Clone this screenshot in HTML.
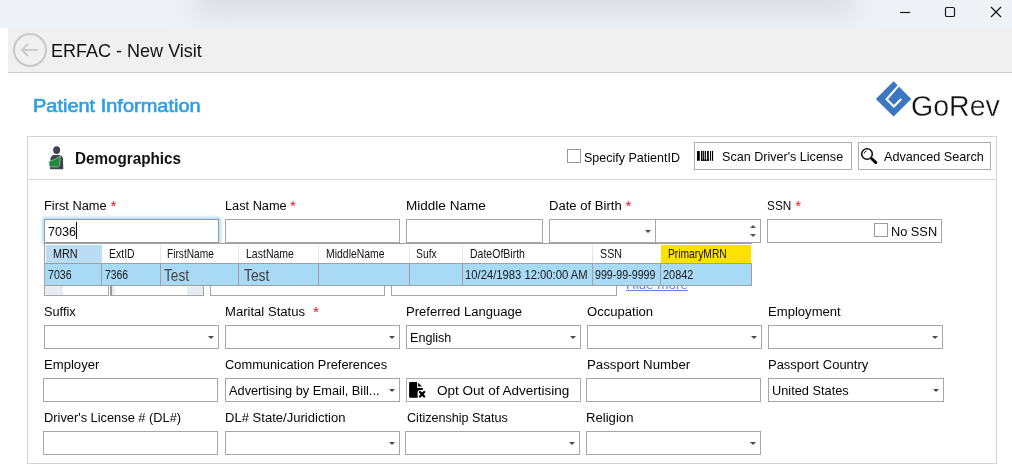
<!DOCTYPE html>
<html><head><meta charset="utf-8"><style>
html,body{margin:0;padding:0;background:#fff;width:1012px;height:465px;overflow:hidden;}
body{position:relative;font-family:"Liberation Sans", sans-serif;}
body>div,body>svg{position:absolute;}
.t{white-space:nowrap;}
</style></head><body>
<div style="left:0px;top:0px;width:1012px;height:28px;background:#eef2f7;overflow:hidden;"></div>
<div style="left:195px;top:-14px;width:660px;height:28px;background:#d3d7dc;filter:blur(14px);opacity:0.85;"></div>
<svg style="left:890px;top:0px" width="122" height="28"><g stroke="#1a1a1a" stroke-width="1.2" fill="none"><line x1="10" y1="12.5" x2="20" y2="12.5"/><rect x="55.5" y="7.5" width="9" height="9" rx="1.3"/><line x1="101" y1="7" x2="111" y2="17"/><line x1="111" y1="7" x2="101" y2="17"/></g></svg>
<div style="left:8px;top:28px;width:1004px;height:44px;background:#f0f0f0;"></div>
<div style="left:8px;top:72px;width:1004px;height:1px;background:#cfcfcf;"></div>
<svg style="left:12px;top:32px" width="36" height="36"><circle cx="18" cy="18" r="16" fill="none" stroke="#c8c8c8" stroke-width="2"/><g stroke="#c8c8c8" stroke-width="1.8" fill="none"><line x1="10" y1="18" x2="26" y2="18"/><polyline points="16,12 10,18 16,24"/></g></svg>
<div class="t" style="left:51.40px;top:43.05px;font-size:17.9px;line-height:17.9px;color:#111;font-weight:400;transform:scaleX(1.0072);transform-origin:0 0;">ERFAC - New Visit</div>
<div class="t" style="left:33.00px;top:97.93px;font-size:17.8px;line-height:17.8px;color:#2f9ee3;font-weight:400;transform:scaleX(1.1229);transform-origin:0 0;-webkit-text-stroke:0.6px #2f9ee3;">Patient Information</div>
<svg style="left:874px;top:79px" width="40" height="40" viewBox="874 79 40 40"><polygon points="893.6,81.3 911.3,98.9 893.6,116.5 875.8,98.9" fill="#3a77c0"/><polyline points="898.6,85.6 886.6,99.2 893.9,106.4 901.2,99" fill="none" stroke="#fff" stroke-width="2.1" stroke-linejoin="miter"/></svg>
<div class="t" style="left:910.80px;top:91.43px;font-size:29.5px;line-height:29.5px;color:#141414;font-weight:400;transform:scaleX(0.9679);transform-origin:0 0;-webkit-text-stroke:0.3px #fff;">GoRev</div>
<div style="left:27px;top:136px;width:970px;height:328px;border:1px solid #d2d2d2;box-sizing:border-box;"></div>
<div style="left:28px;top:179px;width:968px;height:1px;background:#d8d8d8;"></div>
<svg style="left:44px;top:144px" width="26" height="28" viewBox="0 0 26 28"><ellipse cx="12.65" cy="6.1" rx="3.5" ry="3.9" fill="#3d4450"/><path d="M6,25.3 L6.4,15 Q7,11.4 10,11.1 L15.5,11.1 Q18.6,11.4 19,15 L19.3,25.3 Z" fill="#3d4450"/><path d="M4.8,17.6 Q11,16.2 16.6,11.5 L15.4,21.7 Q14.6,23 13.2,23.2 L5.4,22.6 Z" fill="#1e8a3c" stroke="#e8e8e8" stroke-width="0.5"/></svg>
<div class="t" style="left:75.20px;top:150.99px;font-size:15.6px;line-height:15.6px;color:#111;font-weight:700;transform:scaleX(0.9784);transform-origin:0 0;">Demographics</div>
<div style="left:567px;top:149px;width:14px;height:14px;border:1px solid #9a9a9a;box-sizing:border-box;background:#fff;"></div>
<div class="t" style="left:583.50px;top:151.53px;font-size:12.6px;line-height:12.6px;color:#050505;font-weight:400;transform:scaleX(0.9934);transform-origin:0 0;">Specify PatientID</div>
<div style="left:694px;top:142px;width:158px;height:28px;border:1px solid #adadad;box-sizing:border-box;background:#fff;"></div>
<svg style="left:694px;top:146px" width="22" height="18" viewBox="0 0 22 18"><g fill="#000"><rect x="3" y="4.9" width="2.8" height="9.9" rx="0.5"/><rect x="7.0" y="4.9" width="1.2" height="9.9"/><rect x="8.7" y="4.9" width="1.2" height="9.9"/><rect x="10.7" y="4.9" width="1.2" height="9.9"/><rect x="13.1" y="4.9" width="1.7" height="9.9"/><rect x="16" y="4.9" width="1.1" height="9.9"/><rect x="18" y="4.9" width="1.1" height="9.9"/><rect x="6.9" y="13.6" width="7.9" height="1.2"/></g></svg>
<div class="t" style="left:721.60px;top:150.53px;font-size:12.6px;line-height:12.6px;color:#050505;font-weight:400;transform:scaleX(0.9978);transform-origin:0 0;">Scan Driver's License</div>
<div style="left:858px;top:142px;width:133px;height:28px;border:1px solid #adadad;box-sizing:border-box;background:#fff;"></div>
<svg style="left:860px;top:147px" width="18" height="18"><circle cx="7" cy="7" r="5.3" fill="none" stroke="#111" stroke-width="1.6"/><line x1="11.9" y1="11.9" x2="15.9" y2="15.6" stroke="#000" stroke-width="2.8" stroke-linecap="round"/><path d="M4.2,6.6 Q4.4,4.5 6.6,4" stroke="#111" stroke-width="0.9" fill="none"/></svg>
<div class="t" style="left:883.70px;top:150.53px;font-size:12.6px;line-height:12.6px;color:#050505;font-weight:400;transform:scaleX(1.0043);transform-origin:0 0;">Advanced Search</div>
<div class="t" style="left:43.90px;top:200.47px;font-size:12.68px;line-height:12.68px;color:#050505;font-weight:400;transform:scaleX(1.0096);transform-origin:0 0;">First Name</div>
<div class="t" style="left:110.5px;top:198.08px;font-size:15.5px;line-height:15.5px;color:#e8202c;font-weight:400;letter-spacing:0px;">*</div>
<div class="t" style="left:224.80px;top:200.47px;font-size:12.68px;line-height:12.68px;color:#050505;font-weight:400;transform:scaleX(1.0064);transform-origin:0 0;">Last Name</div>
<div class="t" style="left:290px;top:198.08px;font-size:15.5px;line-height:15.5px;color:#e8202c;font-weight:400;letter-spacing:0px;">*</div>
<div class="t" style="left:405.90px;top:200.47px;font-size:12.68px;line-height:12.68px;color:#050505;font-weight:400;transform:scaleX(1.0685);transform-origin:0 0;">Middle Name</div>
<div class="t" style="left:548.80px;top:200.47px;font-size:12.68px;line-height:12.68px;color:#050505;font-weight:400;transform:scaleX(1.0326);transform-origin:0 0;">Date of Birth</div>
<div class="t" style="left:625.5px;top:198.08px;font-size:15.5px;line-height:15.5px;color:#e8202c;font-weight:400;letter-spacing:0px;">*</div>
<div class="t" style="left:766.60px;top:200.47px;font-size:12.68px;line-height:12.68px;color:#050505;font-weight:400;transform:scaleX(0.9326);transform-origin:0 0;">SSN</div>
<div class="t" style="left:795.3px;top:198.08px;font-size:15.5px;line-height:15.5px;color:#e8202c;font-weight:400;letter-spacing:0px;">*</div>
<div style="left:44px;top:219px;width:175px;height:24px;box-shadow:0 0 3px 1.5px rgba(150,210,250,0.75);border-radius:1px;"></div>
<div style="left:44px;top:219px;width:175px;height:24px;border:1px solid #9a9a9a;box-sizing:border-box;background:#fff;"></div>
<div class="t" style="left:47.60px;top:225.78px;font-size:12.9px;line-height:12.9px;color:#050505;font-weight:400;transform:scaleX(0.9790);transform-origin:0 0;">7036</div>
<div style="left:76px;top:222px;width:1px;height:17px;background:#111;"></div>
<div style="left:225px;top:219px;width:175px;height:24px;border:1px solid #a6a6a6;box-sizing:border-box;background:#fff;"></div>
<div style="left:406px;top:219px;width:137px;height:24px;border:1px solid #a6a6a6;box-sizing:border-box;background:#fff;"></div>
<div style="left:549px;top:219px;width:107px;height:24px;border:1px solid #a6a6a6;box-sizing:border-box;background:#fff;"></div>
<div style="left:645px;top:230.0px;width:0;height:0;border-left:3px solid transparent;border-right:3px solid transparent;border-top:3.5px solid #4a4a4a;"></div>
<div style="left:655px;top:219px;width:106px;height:24px;border:1px solid #a6a6a6;box-sizing:border-box;background:#fff;"></div>
<svg style="left:749px;top:222px" width="8" height="18"><polygon points="1,6 4,3 7,6" fill="#555"/><polygon points="1,12 4,15 7,12" fill="#555"/></svg>
<div style="left:767px;top:219px;width:175px;height:24px;border:1px solid #a6a6a6;box-sizing:border-box;background:#fff;"></div>
<div style="left:874px;top:223px;width:14px;height:14px;border:1px solid #9a9a9a;box-sizing:border-box;background:#fff;"></div>
<div class="t" style="left:890.70px;top:226.28px;font-size:12.9px;line-height:12.9px;color:#050505;font-weight:400;transform:scaleX(0.9899);transform-origin:0 0;">No SSN</div>
<div style="left:44px;top:282px;width:65px;height:14px;border:1px solid #a6a6a6;border-top:none;box-sizing:border-box;background:linear-gradient(90deg,#e8ebef 0 18px,#fff 18px);"></div>
<div style="left:110px;top:282px;width:94px;height:14px;border:1px solid #a6a6a6;border-left:2px solid #999;border-top:none;box-sizing:border-box;background:linear-gradient(90deg,#e8ebef 0 3px,#fff 3px 75px,#e8ebef 75px);"></div>
<div style="left:210px;top:282px;width:175px;height:14px;border:1px solid #a6a6a6;border-top:none;box-sizing:border-box;background:#fff;"></div>
<div style="left:391px;top:282px;width:226px;height:14px;border:1px solid #a6a6a6;border-top:none;box-sizing:border-box;background:#fff;"></div>
<div class="t" style="left:626.10px;top:279.05px;font-size:12.7px;line-height:12.7px;color:#5a86e6;font-weight:400;transform:scaleX(1.0578);transform-origin:0 0;text-decoration:underline;">Hide more</div>
<div style="left:44px;top:243px;width:708px;height:43px;border:1px solid #a0a0a0;border-right:none;box-sizing:border-box;background:#fff;"></div>
<div style="left:751px;top:263px;width:1px;height:23px;background:#a0a0a0;"></div>
<div style="left:46px;top:245px;width:56px;height:18px;background:#bcdcf3;"></div>
<div style="left:661px;top:245px;width:90px;height:18px;background:#ffe100;"></div>
<div style="left:160px;top:245px;width:1px;height:18px;background:#e6e6e6;"></div>
<div style="left:238px;top:245px;width:1px;height:18px;background:#e6e6e6;"></div>
<div style="left:318px;top:245px;width:1px;height:18px;background:#e6e6e6;"></div>
<div style="left:409px;top:245px;width:1px;height:18px;background:#e6e6e6;"></div>
<div style="left:462px;top:245px;width:1px;height:18px;background:#e6e6e6;"></div>
<div style="left:592px;top:245px;width:1px;height:18px;background:#e6e6e6;"></div>
<div style="left:45px;top:263px;width:706px;height:1px;background:#a0a0a0;"></div>
<div style="left:45px;top:264px;width:706px;height:21px;background:#a8d9f5;"></div>
<div style="left:101px;top:263px;width:1px;height:22px;background:#a0a0a0;"></div>
<div style="left:160px;top:263px;width:1px;height:22px;background:#a0a0a0;"></div>
<div style="left:238px;top:263px;width:1px;height:22px;background:#a0a0a0;"></div>
<div style="left:318px;top:263px;width:1px;height:22px;background:#a0a0a0;"></div>
<div style="left:409px;top:263px;width:1px;height:22px;background:#a0a0a0;"></div>
<div style="left:462px;top:263px;width:1px;height:22px;background:#a0a0a0;"></div>
<div style="left:592px;top:263px;width:1px;height:22px;background:#a0a0a0;"></div>
<div style="left:660px;top:263px;width:1px;height:22px;background:#a0a0a0;"></div>
<div class="t" style="left:52.80px;top:248.07px;font-size:12.2px;line-height:12.2px;color:#111;font-weight:400;transform:scaleX(0.8899);transform-origin:0 0;">MRN</div>
<div class="t" style="left:108.90px;top:248.07px;font-size:12.2px;line-height:12.2px;color:#111;font-weight:400;transform:scaleX(0.8616);transform-origin:0 0;">ExtID</div>
<div class="t" style="left:166.80px;top:248.07px;font-size:12.2px;line-height:12.2px;color:#111;font-weight:400;transform:scaleX(0.8339);transform-origin:0 0;">FirstName</div>
<div class="t" style="left:245.60px;top:248.07px;font-size:12.2px;line-height:12.2px;color:#111;font-weight:400;transform:scaleX(0.8628);transform-origin:0 0;">LastName</div>
<div class="t" style="left:325.80px;top:248.07px;font-size:12.2px;line-height:12.2px;color:#111;font-weight:400;transform:scaleX(0.8569);transform-origin:0 0;">MiddleName</div>
<div class="t" style="left:416.10px;top:248.07px;font-size:12.2px;line-height:12.2px;color:#111;font-weight:400;transform:scaleX(0.8484);transform-origin:0 0;">Sufx</div>
<div class="t" style="left:469.50px;top:248.07px;font-size:12.2px;line-height:12.2px;color:#111;font-weight:400;transform:scaleX(0.8628);transform-origin:0 0;">DateOfBirth</div>
<div class="t" style="left:599.70px;top:248.07px;font-size:12.2px;line-height:12.2px;color:#111;font-weight:400;transform:scaleX(0.8775);transform-origin:0 0;">SSN</div>
<div class="t" style="left:667.90px;top:248.07px;font-size:12.2px;line-height:12.2px;color:#111;font-weight:400;transform:scaleX(0.8426);transform-origin:0 0;">PrimaryMRN</div>
<div class="t" style="left:48.10px;top:269.83px;font-size:11.9px;line-height:11.9px;color:#1a1a1a;font-weight:400;transform:scaleX(0.8951);transform-origin:0 0;">7036</div>
<div class="t" style="left:105.40px;top:269.83px;font-size:11.9px;line-height:11.9px;color:#1a1a1a;font-weight:400;transform:scaleX(0.8724);transform-origin:0 0;">7366</div>
<div class="t" style="left:164.30px;top:267.66px;font-size:16px;line-height:16px;color:#454545;font-weight:400;transform:scaleX(0.8549);transform-origin:0 0;">Test</div>
<div class="t" style="left:244.00px;top:267.66px;font-size:16px;line-height:16px;color:#454545;font-weight:400;transform:scaleX(0.8651);transform-origin:0 0;">Test</div>
<div class="t" style="left:465.10px;top:269.83px;font-size:11.9px;line-height:11.9px;color:#1a1a1a;font-weight:400;transform:scaleX(0.9460);transform-origin:0 0;">10/24/1983 12:00:00 AM</div>
<div class="t" style="left:595.30px;top:269.83px;font-size:11.9px;line-height:11.9px;color:#1a1a1a;font-weight:400;transform:scaleX(0.8967);transform-origin:0 0;">999-99-9999</div>
<div class="t" style="left:663.30px;top:269.83px;font-size:11.9px;line-height:11.9px;color:#1a1a1a;font-weight:400;transform:scaleX(0.9189);transform-origin:0 0;">20842</div>
<div class="t" style="left:43.60px;top:306.47px;font-size:12.68px;line-height:12.68px;color:#050505;font-weight:400;transform:scaleX(1.0060);transform-origin:0 0;">Suffix</div>
<div class="t" style="left:224.60px;top:306.47px;font-size:12.68px;line-height:12.68px;color:#050505;font-weight:400;transform:scaleX(1.0330);transform-origin:0 0;">Marital Status</div>
<div class="t" style="left:313.1px;top:304.08px;font-size:15.5px;line-height:15.5px;color:#e8202c;font-weight:400;letter-spacing:0px;">*</div>
<div class="t" style="left:405.90px;top:306.47px;font-size:12.68px;line-height:12.68px;color:#050505;font-weight:400;transform:scaleX(1.0285);transform-origin:0 0;">Preferred Language</div>
<div class="t" style="left:586.70px;top:306.47px;font-size:12.68px;line-height:12.68px;color:#050505;font-weight:400;transform:scaleX(1.0318);transform-origin:0 0;">Occupation</div>
<div class="t" style="left:768.40px;top:306.47px;font-size:12.68px;line-height:12.68px;color:#050505;font-weight:400;transform:scaleX(1.0326);transform-origin:0 0;">Employment</div>
<div style="left:44px;top:325px;width:175px;height:24px;border:1px solid #a6a6a6;box-sizing:border-box;background:#fff;"></div>
<div style="left:208px;top:336.0px;width:0;height:0;border-left:3px solid transparent;border-right:3px solid transparent;border-top:3.5px solid #4a4a4a;"></div>
<div style="left:225px;top:325px;width:175px;height:24px;border:1px solid #a6a6a6;box-sizing:border-box;background:#fff;"></div>
<div style="left:389px;top:336.0px;width:0;height:0;border-left:3px solid transparent;border-right:3px solid transparent;border-top:3.5px solid #4a4a4a;"></div>
<div style="left:406px;top:325px;width:175px;height:24px;border:1px solid #a6a6a6;box-sizing:border-box;background:#fff;"></div>
<div style="left:570px;top:336.0px;width:0;height:0;border-left:3px solid transparent;border-right:3px solid transparent;border-top:3.5px solid #4a4a4a;"></div>
<div style="left:587px;top:325px;width:175px;height:24px;border:1px solid #a6a6a6;box-sizing:border-box;background:#fff;"></div>
<div style="left:751px;top:336.0px;width:0;height:0;border-left:3px solid transparent;border-right:3px solid transparent;border-top:3.5px solid #4a4a4a;"></div>
<div style="left:768px;top:325px;width:175px;height:24px;border:1px solid #a6a6a6;box-sizing:border-box;background:#fff;"></div>
<div style="left:932px;top:336.0px;width:0;height:0;border-left:3px solid transparent;border-right:3px solid transparent;border-top:3.5px solid #4a4a4a;"></div>
<div class="t" style="left:409.60px;top:332.28px;font-size:12.9px;line-height:12.9px;color:#050505;font-weight:400;transform:scaleX(0.9761);transform-origin:0 0;">English</div>
<div class="t" style="left:43.60px;top:359.47px;font-size:12.68px;line-height:12.68px;color:#050505;font-weight:400;transform:scaleX(1.0341);transform-origin:0 0;">Employer</div>
<div class="t" style="left:225.00px;top:359.47px;font-size:12.68px;line-height:12.68px;color:#050505;font-weight:400;transform:scaleX(1.0140);transform-origin:0 0;">Communication Preferences</div>
<div class="t" style="left:586.70px;top:359.47px;font-size:12.68px;line-height:12.68px;color:#050505;font-weight:400;transform:scaleX(1.0471);transform-origin:0 0;">Passport Number</div>
<div class="t" style="left:767.60px;top:359.47px;font-size:12.68px;line-height:12.68px;color:#050505;font-weight:400;transform:scaleX(1.0240);transform-origin:0 0;">Passport Country</div>
<div style="left:43px;top:378px;width:175px;height:24px;border:1px solid #a6a6a6;box-sizing:border-box;background:#fff;"></div>
<div style="left:225px;top:378px;width:175px;height:24px;border:1px solid #a6a6a6;box-sizing:border-box;background:#fff;"></div>
<div style="left:389px;top:389.0px;width:0;height:0;border-left:3px solid transparent;border-right:3px solid transparent;border-top:3.5px solid #4a4a4a;"></div>
<div class="t" style="left:228.80px;top:385.28px;font-size:12.9px;line-height:12.9px;color:#050505;font-weight:400;transform:scaleX(0.9910);transform-origin:0 0;">Advertising by Email, Bill...</div>
<div style="left:406px;top:378px;width:175px;height:24px;border:1px solid #adadad;box-sizing:border-box;background:#fff;"></div>
<svg style="left:406px;top:379px" width="22" height="22" viewBox="0 0 22 22"><path d="M3.1,4 Q3.1,3.1 4,3.1 L11.1,3.1 L11.1,9 L16.8,9 L16.8,18.7 L4,18.7 Q3.1,18.7 3.1,17.8 Z" fill="#000"/><path d="M12.1,3.8 L12.1,7.6 L16.1,7.6 Z" fill="#000"/><rect x="11.6" y="11" width="9" height="9" rx="2.5" fill="#fff"/><g stroke="#000" stroke-width="2.3" stroke-linecap="round"><line x1="14" y1="13" x2="18.2" y2="17.5"/><line x1="18.2" y1="13" x2="14" y2="17.5"/></g><circle cx="16.1" cy="15.25" r="1.7" fill="#000"/></svg>
<div class="t" style="left:436.80px;top:385.28px;font-size:12.9px;line-height:12.9px;color:#050505;font-weight:400;transform:scaleX(1.0497);transform-origin:0 0;">Opt Out of Advertising</div>
<div style="left:586px;top:378px;width:175px;height:24px;border:1px solid #a6a6a6;box-sizing:border-box;background:#fff;"></div>
<div style="left:768px;top:378px;width:176px;height:24px;border:1px solid #a6a6a6;box-sizing:border-box;background:#fff;"></div>
<div style="left:933px;top:389.0px;width:0;height:0;border-left:3px solid transparent;border-right:3px solid transparent;border-top:3.5px solid #4a4a4a;"></div>
<div class="t" style="left:772.00px;top:385.28px;font-size:12.9px;line-height:12.9px;color:#050505;font-weight:400;transform:scaleX(0.9914);transform-origin:0 0;">United States</div>
<div class="t" style="left:43.60px;top:412.47px;font-size:12.68px;line-height:12.68px;color:#050505;font-weight:400;transform:scaleX(1.0117);transform-origin:0 0;">Driver's License # (DL#)</div>
<div class="t" style="left:225.00px;top:412.47px;font-size:12.68px;line-height:12.68px;color:#050505;font-weight:400;transform:scaleX(1.0302);transform-origin:0 0;">DL# State/Juridiction</div>
<div class="t" style="left:406.70px;top:412.47px;font-size:12.68px;line-height:12.68px;color:#050505;font-weight:400;transform:scaleX(0.9941);transform-origin:0 0;">Citizenship Status</div>
<div class="t" style="left:585.50px;top:412.47px;font-size:12.68px;line-height:12.68px;color:#050505;font-weight:400;transform:scaleX(1.0363);transform-origin:0 0;">Religion</div>
<div style="left:43px;top:431px;width:175px;height:24px;border:1px solid #a6a6a6;box-sizing:border-box;background:#fff;"></div>
<div style="left:225px;top:431px;width:175px;height:24px;border:1px solid #a6a6a6;box-sizing:border-box;background:#fff;"></div>
<div style="left:389px;top:442.0px;width:0;height:0;border-left:3px solid transparent;border-right:3px solid transparent;border-top:3.5px solid #4a4a4a;"></div>
<div style="left:405px;top:431px;width:175px;height:24px;border:1px solid #a6a6a6;box-sizing:border-box;background:#fff;"></div>
<div style="left:569px;top:442.0px;width:0;height:0;border-left:3px solid transparent;border-right:3px solid transparent;border-top:3.5px solid #4a4a4a;"></div>
<div style="left:586px;top:431px;width:175px;height:24px;border:1px solid #a6a6a6;box-sizing:border-box;background:#fff;"></div>
<div style="left:750px;top:442.0px;width:0;height:0;border-left:3px solid transparent;border-right:3px solid transparent;border-top:3.5px solid #4a4a4a;"></div>
</body></html>
